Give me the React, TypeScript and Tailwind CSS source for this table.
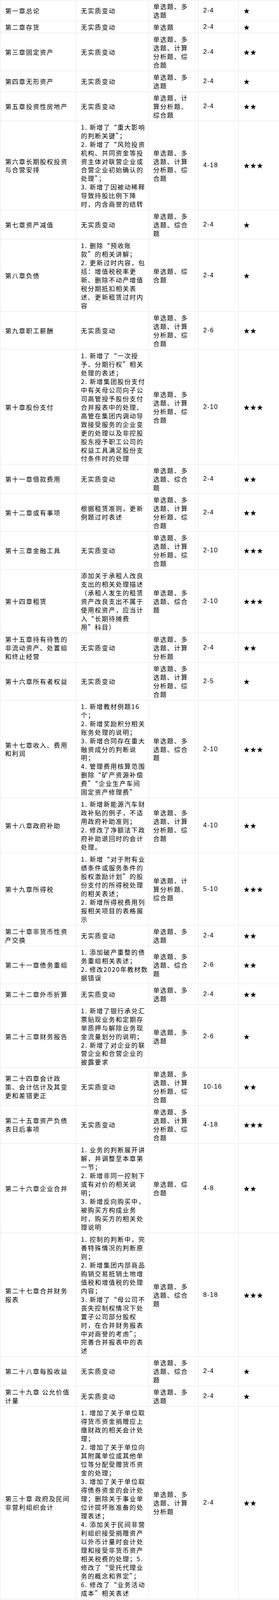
import React from 'react';

interface ChapterRow {
  chapter: string;
  change: string;
  types: string;
  score: string;
  stars: number;
}

const T2 = '单选题、多\n选题';
const T4 = '单选题、多\n选题、计算\n分析题、综\n合题';
const TZ = '单选题、多\n选题、综合\n题';
const TJ = '单选题、计\n算分析题、\n综合题';
const NONE = '无实质变动';

const rows: ChapterRow[] = [
  { chapter: '第一章总论', change: NONE, types: T2, score: '2-4', stars: 1 },
  { chapter: '第二章存货', change: NONE, types: '单选题', score: '2-4', stars: 1 },
  { chapter: '第三章固定资产', change: NONE, types: T4, score: '2-4', stars: 2 },
  { chapter: '第四章无形资产', change: NONE, types: T2, score: '2-4', stars: 1 },
  { chapter: '第五章投资性房地产', change: NONE, types: TJ, score: '2-4', stars: 2 },
  {
    chapter: '第六章长期股权投资\n与合营安排',
    change:
      '1. 新增了“重大影响\n的判断关键”；\n2. 新增了“风险投资\n机构、共同资金等投\n资主体对联营企业或\n合营企业初始确认的\n处理”；\n3. 新增了因被动稀释\n导致持股比例下降\n时，内含商誉的结转',
    types: T4,
    score: '4-18',
    stars: 3,
  },
  { chapter: '第七章资产减值', change: NONE, types: TZ, score: '2-4', stars: 1 },
  {
    chapter: '第八章负债',
    change:
      '1. 删除“预收账\n款”的相关讲解；\n2. 更新过时内容，包\n括：增值税税率更\n新、删除不动产增值\n税分期抵扣相关表\n述、更新租赁过时内\n容',
    types: '单选题、综\n合题',
    score: '2-4',
    stars: 1,
  },
  { chapter: '第九章职工薪酬', change: NONE, types: T4, score: '2-6', stars: 2 },
  {
    chapter: '第十章股份支付',
    change:
      '1. 新增了“一次授\n予、分期行权”相关\n处理的表述；\n2. 新增集团股份支付\n中有关母公司向子公\n司高管授予股份支付\n合并报表中的处理、\n高管在集团内调动导\n致接受服务的企业变\n更的处理以及非控股\n股东授予职工公司的\n权益工具满足股份支\n付条件时的处理',
    types: T4,
    score: '2-10',
    stars: 3,
  },
  { chapter: '第十一章借款费用', change: NONE, types: TZ, score: '2-4', stars: 2 },
  {
    chapter: '第十二章或有事项',
    change: '根据租赁准则，更新\n例题过时表述',
    types: T4,
    score: '2-4',
    stars: 2,
  },
  { chapter: '第十三章金融工具', change: NONE, types: T4, score: '2-10', stars: 3 },
  {
    chapter: '第十四章租赁',
    change:
      '添加关于承租人改良\n支出的相关处理描述\n（承租人发生的租赁\n资产改良支出不属于\n使用权资产，应当计\n入“长期待摊费\n用”科目）',
    types: TZ,
    score: '2-10',
    stars: 3,
  },
  {
    chapter: '第十五章持有待售的\n非流动资产、处置组\n和终止经营',
    change: NONE,
    types: '单选题、多\n选题、计算\n分析题',
    score: '2-4',
    stars: 2,
  },
  { chapter: '第十六章所有者权益', change: NONE, types: T4, score: '2-5', stars: 1 },
  {
    chapter: '第十七章收入、费用\n和利润',
    change:
      '1. 新增教材例题16\n个；\n2. 新增奖励积分相关\n账务处理的说明；\n3. 新增合同存在重大\n融资成分的判断说\n明；\n4. 管理费用核算范围\n删除“矿产资源补偿\n费”“企业生产车间\n固定资产修理费”',
    types: TZ,
    score: '2-10',
    stars: 3,
  },
  {
    chapter: '第十八章政府补助',
    change:
      '1. 新增新能源汽车财\n政补贴的例子，不适\n用政府补助准则；\n2. 修改了净额法下政\n府补助退回时的会计\n处理。',
    types: T4,
    score: '4-10',
    stars: 2,
  },
  {
    chapter: '第十九章所得税',
    change:
      '1. 新增“对于附有业\n绩条件或服务条件的\n股权激励计划”的股\n份支付的所得税处理\n的相关表述；\n2. 新增所得税费用列\n报相关项目的表格展\n示',
    types: TJ,
    score: '5-10',
    stars: 3,
  },
  { chapter: '第二十章非货币性资\n产交换', change: NONE, types: T2, score: '2-4', stars: 2 },
  {
    chapter: '第二十一章债务重组',
    change: '1. 添加破产重整的债\n务重组相关表述；\n2. 修改2020年教材数\n据错误',
    types: TZ,
    score: '2-6',
    stars: 2,
  },
  { chapter: '第二十二章外币折算', change: NONE, types: T2, score: '2-4', stars: 2 },
  {
    chapter: '第二十三章财务报告',
    change:
      '1. 新增了银行承兑汇\n票贴现业务和定期存\n单质押与解除业务现\n金流量划分的说明；\n2. 新增了对企业的联\n营企业和合营企业的\n披露要求',
    types: T2,
    score: '2-6',
    stars: 1,
  },
  {
    chapter: '第二十四章会计政\n策、会计估计及其变\n更和差错更正',
    change: NONE,
    types: T4,
    score: '10-16',
    stars: 2,
  },
  { chapter: '第二十五章资产负债\n表日后事项', change: NONE, types: T4, score: '4-18', stars: 3 },
  {
    chapter: '第二十六章企业合并',
    change:
      '1. 业务的判断展开讲\n解，并调整至本章第\n一节；\n2. 新增非同一控制下\n或有对价的相关说\n明；\n3. 新增反向购买中，\n被购买方构成业务\n时，购买方的相关处\n理说明',
    types: '单选题、综\n合题',
    score: '4-8',
    stars: 2,
  },
  {
    chapter: '第二十七章合并财务\n报表',
    change:
      '1. 控制的判断中，完\n善特殊情况的判断原\n则；\n2. 新增集团内部商品\n购销交易抵销土地增\n值税和增值税的处理\n内容；\n3. 新增了“母公司不\n丧失控制权情况下处\n置子公司部分股权\n时，在合并财务报表\n中对商誉的考虑”；\n完善合并报表中的表\n述',
    types: TZ,
    score: '8-18',
    stars: 3,
  },
  { chapter: '第二十八章每股收益', change: NONE, types: TZ, score: '2-4', stars: 1 },
  { chapter: '第二十九章 公允价值\n计量', change: NONE, types: T2, score: '2-4', stars: 1 },
  {
    chapter: '第三十章 政府及民间\n非营利组织会计',
    change:
      '1. 增加了关于单位取\n得货币资金捐赠应上\n缴财政的相关会计处\n理；\n2. 增加了关于单位向\n其附属单位或其他单\n位等分配受赠货币资\n金的处理；\n3. 增加了关于单位取\n得债券资金的会计处\n理；删除关于事业单\n位计提坏账准备的处\n理表述；\n4. 添加关于民间非营\n利组织接受捐赠资产\n以外币计量时会计处\n理和接受非货币资产\n相关税费的处理；5.\n修改了“受托代理业\n务的概念和界定”；\n6. 修改了“业务活动\n成本”相关表述',
    types: '单选题、多\n选题、计算\n分析题',
    score: '2-4',
    stars: 2,
  },
];

const Lines: React.FC<{ text: string; className?: string }> = ({ text, className = '' }) => (
  <div className={className}>
    {text.split('\n').map((line, i) => (
      <div key={i} className="h-[21.98px] whitespace-pre leading-[22px]">
        {line}
      </div>
    ))}
  </div>
);

const cell = 'border border-[#e6e6e6] px-3 py-[4px] align-middle';

const App: React.FC = () => {
  return (
    <div className="w-[714px] bg-white">
      <table className="w-[714px] table-fixed border-collapse font-['Noto_Sans_CJK_SC','Liberation_Sans',sans-serif] text-[16px] tracking-[1.8px] text-black">
        <colgroup>
          <col className="w-[194px]" />
          <col className="w-[185px]" />
          <col className="w-[128px]" />
          <col className="w-[103px]" />
          <col className="w-[104px]" />
        </colgroup>
        <tbody>
          {rows.map((row, index) => (
            <tr key={index}>
              <td className={cell}>
                <Lines text={row.chapter} />
              </td>
              <td className={cell}>
                <Lines text={row.change} />
              </td>
              <td className={cell}>
                <Lines text={row.types} />
              </td>
              <td className={cell}>
                <Lines text={row.score} className="font-['Liberation_Sans',sans-serif] text-[16px] tracking-[1.5px]" />
              </td>
              <td className={cell}>
                <Lines text={'★'.repeat(row.stars)} className="tracking-[1px]" />
              </td>
            </tr>
          ))}
        </tbody>
      </table>
    </div>
  );
};

export default App;
